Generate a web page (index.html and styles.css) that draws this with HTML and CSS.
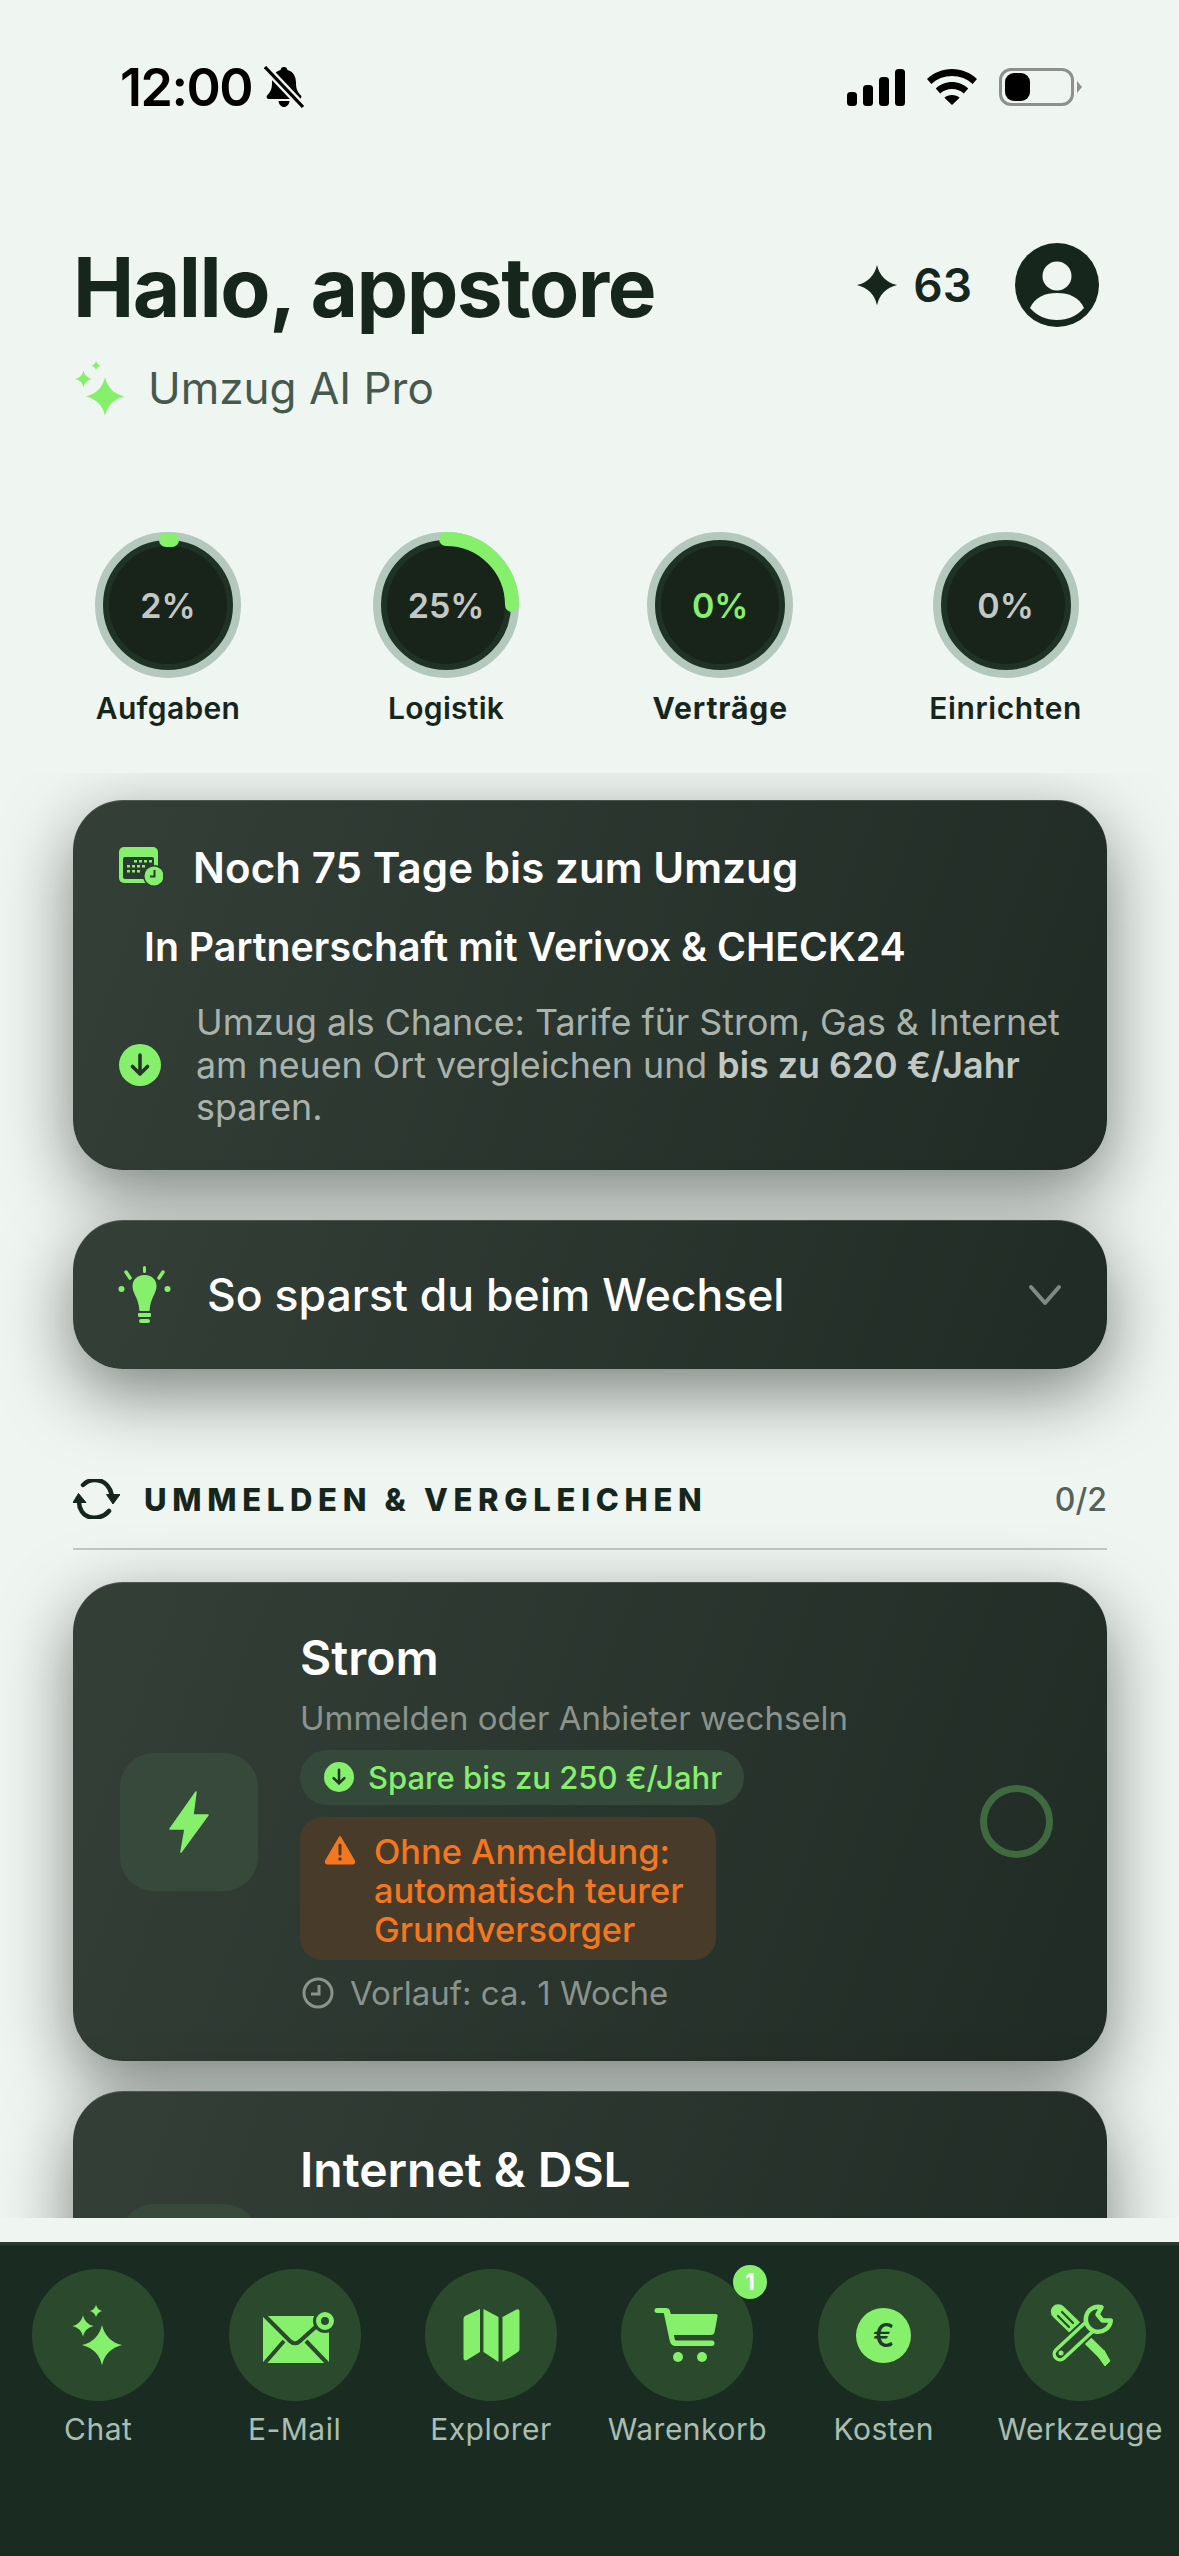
FILE: index.html
```html
<!DOCTYPE html>
<html lang="de">
<head>
  <meta charset="UTF-8" />
  <meta name="viewport" content="width=device-width, initial-scale=1.0"/>
  <title>Umzug AI</title>
  <link rel="stylesheet" href="styles.css">
</head>
<body>
  <svg class="defs" width="0" height="0">
    <symbol id="star" viewBox="0 0 24 24">
      <path d="M12 .5Q14.200 9.800 23.500 12 14.200 14.200 12 23.500 9.800 14.200 .5 12 9.800 9.800 12 .5z"/>
    </symbol>
    <symbol id="down" viewBox="0 0 42 42">
      <circle cx="21" cy="21" r="21" fill="#86ef6c"/>
      <path d="M21 11v19M13.500 22.500 21 30l7.500-7.500" fill="none" stroke="#25352a" stroke-width="3.600" stroke-linecap="round" stroke-linejoin="round"/>
    </symbol>
  </svg>

  <div class="status">
    <div class="status-left">
      <span class="time">12:00</span>
      <svg class="bell" viewBox="0 0 40 42">
        <path d="M20 1c2 0 3.200 1.300 3.400 3 6 1.500 8.600 6.500 8.600 13 0 6 1.500 9 5 12.500 1 1.500.2 3.500-2 3.500H5c-2.200 0-3-2-2-3.500C6.500 26 8 23 8 17 8 10.500 10.600 5.500 16.600 4c.2-1.700 1.400-3 3.400-3zM14.500 35h11c-.4 3.500-2.700 6-5.500 6s-5.100-2.500-5.500-6z"/>
        <path d="M1 1 39 41" stroke="#eff5f1" stroke-width="8"/>
        <path d="M1 1 39 41" stroke="#000" stroke-width="3.200"/>
      </svg>
    </div>
    <div class="status-right">
      <svg class="signal" viewBox="0 0 58 37">
        <rect x="0" y="23" width="10" height="14" rx="3.500"/>
        <rect x="16" y="16" width="10" height="21" rx="3.500"/>
        <rect x="32" y="8" width="10" height="29" rx="3.500"/>
        <rect x="48" y="0" width="10" height="37" rx="3.500"/>
      </svg>
      <svg class="wifi" viewBox="0 0 50 36">
        <path d="M25 0c9.500 0 18.500 3.800 25 10l-4.400 5C40 9.800 33 7 25 7S10 9.800 4.400 15L0 10C6.500 3.800 15.500 0 25 0z"/>
        <path d="M25 13c6.300 0 12 2.400 16.200 6.500l-4.400 5C33.700 21.600 29.600 20 25 20s-8.700 1.600-11.800 4.500l-4.400-5C13 15.400 18.700 13 25 13z"/>
        <path d="M25 26c3 0 5.600 1 7.600 2.800L25 36l-7.600-7.200C19.400 27 22 26 25 26z"/>
      </svg>
      <div class="battery"><div class="battery-fill"></div></div>
    </div>
  </div>

  <header class="hello">
    <h1>Hallo, appstore</h1>
    <div class="hello-right">
      <svg class="points-star"><use href="#star"/></svg>
      <span class="points">63</span>
      <svg class="avatar" viewBox="0 0 84 84">
        <circle cx="42" cy="42" r="42" fill="#17261d"/>
        <circle cx="42" cy="33" r="14.500" fill="#eff5f1"/>
        <path d="M15 65c5-11 15-15 27-15s22 4 27 15c-7 8-16 12-27 12s-20-4-27-12z" fill="#eff5f1"/>
      </svg>
    </div>
  </header>

  <div class="plan">
    <svg class="plan-icon" viewBox="0 0 50 58">
      <use href="#star" x="10" y="17" width="40" height="41"/>
      <use href="#star" x="0" y="10" width="17" height="20"/>
      <use href="#star" x="16" y="0" width="10" height="13"/>
    </svg>
    <span>Umzug AI Pro</span>
  </div>

  <div class="rings">
    <div class="ring-item">
      <div class="ring">
        <svg viewBox="0 0 146 146">
          <circle class="ring-base" cx="73" cy="73" r="69"/>
          <circle class="ring-inner" cx="73" cy="73" r="59"/>
          <path class="ring-arc" d="M71 8h6"/>
        </svg>
        <span class="ring-value">2%</span>
      </div>
      <div class="ring-label">Aufgaben</div>
    </div>
    <div class="ring-item">
      <div class="ring">
        <svg viewBox="0 0 146 146">
          <circle class="ring-base" cx="73" cy="73" r="69"/>
          <circle class="ring-inner" cx="73" cy="73" r="59"/>
          <path class="ring-arc" d="M73 7A66 66 0 0 1 139 73"/>
        </svg>
        <span class="ring-value">25%</span>
      </div>
      <div class="ring-label">Logistik</div>
    </div>
    <div class="ring-item ring-item-third">
      <div class="ring">
        <svg viewBox="0 0 146 146">
          <circle class="ring-base" cx="73" cy="73" r="69"/>
          <circle class="ring-inner" cx="73" cy="73" r="59"/>
        </svg>
        <span class="ring-value ring-value-green">0%</span>
      </div>
      <div class="ring-label ring-label-bold">Verträge</div>
    </div>
    <div class="ring-item">
      <div class="ring">
        <svg viewBox="0 0 146 146">
          <circle class="ring-base" cx="73" cy="73" r="69"/>
          <circle class="ring-inner" cx="73" cy="73" r="59"/>
        </svg>
        <span class="ring-value">0%</span>
      </div>
      <div class="ring-label ring-label-wide">Einrichten</div>
    </div>
  </div>

  <main class="scroll">
    <section class="card countdown">
      <div class="countdown-title">
        <svg class="calendar" viewBox="0 0 44 40">
          <rect x="0" y="0" width="39" height="36" rx="5" fill="#86ef6c"/>
          <rect x="4" y="10" width="31" height="22" rx="2" fill="#2d3a32"/>
          <g fill="#86ef6c">
            <rect x="15" y="13" width="3" height="2.500"/><rect x="20" y="13" width="3" height="2.500"/><rect x="25" y="13" width="3" height="2.500"/><rect x="30" y="13" width="3" height="2.500"/>
            <rect x="8" y="18" width="3" height="2.500"/><rect x="13" y="18" width="3" height="2.500"/><rect x="18" y="18" width="3" height="2.500"/><rect x="23" y="18" width="3" height="2.500"/>
            <rect x="8" y="23" width="3" height="2.500"/><rect x="13" y="23" width="3" height="2.500"/><rect x="18" y="23" width="3" height="2.500"/>
          </g>
          <circle cx="35" cy="29" r="11" fill="#2d3a32"/>
          <circle cx="35" cy="29" r="9.500" fill="#86ef6c"/>
          <path d="M35.500 23v6.500H31" fill="none" stroke="#2d3a32" stroke-width="2"/>
        </svg>
        <span>Noch 75 Tage bis zum Umzug</span>
      </div>
      <div class="partner">In Partnerschaft mit Verivox &amp; CHECK24</div>
      <div class="chance">
        <svg class="down-big"><use href="#down"/></svg>
        <p>Umzug als Chance: Tarife für Strom, Gas &amp; Internet am neuen Ort vergleichen und <b>bis zu 620 €/Jahr</b> sparen.</p>
      </div>
    </section>

    <section class="card tips">
      <svg class="bulb" viewBox="0 0 53 58">
        <g fill="#86ef6c">
          <path d="M26.500 9c8 0 12 5.500 12 11 0 8-6 11-7 25H21.500c-1-14-7-17-7-25 0-5.500 4-11 12-11z"/>
          <rect x="20" y="47" width="13" height="4" rx="1"/>
          <rect x="21" y="53" width="11" height="4" rx="2"/>
          <rect x="25" y="0" width="3" height="7" rx="1.500"/>
          <circle cx="3.500" cy="23" r="3"/>
          <circle cx="49.500" cy="23" r="3"/>
          <path d="M8 6l4 6M45 6l-4 6" stroke="#86ef6c" stroke-width="3.500" stroke-linecap="round"/>
        </g>
      </svg>
      <span class="tips-text">So sparst du beim Wechsel</span>
      <svg class="chevron" viewBox="0 0 34 22">
        <path d="M3 3l14 16L31 3" fill="none" stroke="#7f8a83" stroke-width="4" stroke-linecap="round" stroke-linejoin="round"/>
      </svg>
    </section>

    <div class="section-head">
      <svg class="sync" viewBox="0 0 47 40">
        <path d="M10 6C15 1 22 0 28 2c5 2 9 7 10.500 13M36 32c-5 6-13 8-20 6-6-2-10-8-10-15" fill="none" stroke="#17261d" stroke-width="4.500" stroke-linecap="round"/>
        <path d="M33.500 15.500H47L40 25zM0 23.500h13L5.500 14.500z" fill="#17261d" stroke="#17261d" stroke-linejoin="round"/>
      </svg>
      <span class="section-title">UMMELDEN &amp; VERGLEICHEN</span>
      <span class="section-count">0/2</span>
    </div>

    <section class="card task">
      <div class="tile">
        <svg class="bolt" viewBox="0 0 40 62">
          <path d="M27 1 1 38h15l-4 23 27-37H24z" fill="#86ef6c" stroke="#86ef6c" stroke-width="1.500" stroke-linejoin="round"/>
        </svg>
      </div>
      <div class="task-body">
        <div class="task-title">Strom</div>
        <div class="task-sub">Ummelden oder Anbieter wechseln</div>
        <div class="save-pill">
          <svg class="down-small"><use href="#down"/></svg>
          <span>Spare bis zu 250 €/Jahr</span>
        </div>
        <div class="warn">
          <svg class="warn-icon" viewBox="0 0 32 30">
            <path d="M16 2 30 26c.6 1.300 0 2.500-1.500 2.500h-25C2 28.500 1.400 27.300 2 26z" fill="#f47720" stroke="#f47720" stroke-width="2" stroke-linejoin="round"/>
            <path d="M16 10v9" stroke="#493b29" stroke-width="3" stroke-linecap="round"/>
            <circle cx="16" cy="24" r="1.800" fill="#493b29"/>
          </svg>
          <span>Ohne Anmeldung: automatisch teurer Grundversorger</span>
        </div>
        <div class="lead">
          <svg class="clock" viewBox="0 0 32 32">
            <circle cx="16" cy="16" r="14" fill="none" stroke="#8a938c" stroke-width="3"/>
            <path d="M17 8v9H9" fill="none" stroke="#8a938c" stroke-width="3"/>
          </svg>
          <span>Vorlauf: ca. 1 Woche</span>
        </div>
      </div>
      <div class="check"></div>
    </section>

    <section class="card task task-next">
      <div class="tile"></div>
      <div class="task-body">
        <div class="task-title">Internet &amp; DSL</div>
      </div>
    </section>
  </main>

  <div class="strip"></div>

  <nav class="tabs">
    <div class="tab">
      <div class="tab-circle">
        <svg class="tab-icon" viewBox="0 0 66 66">
          <g fill="#86ef6c">
            <use href="#star" x="16" y="22" width="42" height="42"/>
            <use href="#star" x="7" y="13" width="22" height="22"/>
            <use href="#star" x="24.500" y="2.500" width="13" height="13"/>
          </g>
        </svg>
      </div>
      <span>Chat</span>
    </div>
    <div class="tab">
      <div class="tab-circle">
        <svg class="tab-icon" viewBox="0 0 66 66">
          <path d="M1 14H67V61H1z" fill="#86ef6c"/>
          <path d="M1 12l27 27c3 3 7 3 10 0l30-27M2 62l20-23M66 62 44 39" fill="none" stroke="#2b4a2d" stroke-width="4"/>
          <circle cx="63" cy="19" r="12" fill="#2b4a2d"/>
          <circle cx="63" cy="19" r="6.500" fill="#2b4a2d" stroke="#86ef6c" stroke-width="5"/>
        </svg>
      </div>
      <span>E-Mail</span>
    </div>
    <div class="tab">
      <div class="tab-circle">
        <svg class="tab-icon" viewBox="0 0 66 66">
          <g fill="#86ef6c">
            <path d="M5.500 17c0-1.500.8-2.500 2-3.200L22 7v43L9 58c-2 1-3.500 0-3.500-2z"/>
            <path d="M25.500 7l15 8v45l-15-10z"/>
            <path d="M44.500 15l14-7.500c1.500-.7 3 .2 3 1.800V47c0 1.500-.8 2.500-2 3.200L44.500 60z"/>
          </g>
        </svg>
      </div>
      <span>Explorer</span>
    </div>
    <div class="tab">
      <div class="tab-circle">
        <svg class="tab-icon" viewBox="0 0 66 66">
          <g fill="#86ef6c">
            <path d="M3 6h9c2 0 3.500 1 4 3l.8 3H62c1 0 1.800 1 1.600 2l-3 16c-.3 2-1.800 3-3.600 3H20l.7 4c.2 1 1 1.500 2 1.500H58c1.500 0 2.500 1 2.500 2.700S59.500 44 58 44H21.500c-3 0-5-1.800-5.600-4.500L10 12c0-.8-.5-1-1-1H3C1.500 11 .5 10 .5 8.500S1.500 6 3 6z"/>
            <circle cx="24" cy="55" r="5"/>
            <circle cx="48" cy="55" r="5"/>
          </g>
        </svg>
      </div>
      <div class="badge">1</div>
      <span>Warenkorb</span>
    </div>
    <div class="tab">
      <div class="tab-circle">
        <div class="euro">€</div>
      </div>
      <span>Kosten</span>
    </div>
    <div class="tab">
      <div class="tab-circle">
        <svg class="tab-icon" viewBox="0 0 66 66">
          <path d="M11.300 9.700 29.700 27.300" stroke="#86ef6c" stroke-width="15" stroke-linecap="round"/>
          <path d="M11 14l11 11M15 10l11 11" stroke="#2b4a2d" stroke-width="2.200" stroke-linecap="round"/>
          <path d="M30 28 54.700 52.300" stroke="#86ef6c" stroke-width="9"/>
          <path d="M49.700 52.300 57 48.300 63 59l-5 5z" fill="#86ef6c" stroke="#86ef6c" stroke-linejoin="round"/>
          <path d="M42 25 13 52" stroke="#2b4a2d" stroke-width="19" stroke-linecap="round"/>
          <path d="M42 25 13 52" stroke="#86ef6c" stroke-width="15" stroke-linecap="round"/>
          <path d="M42 25 13 52" stroke="#2b4a2d" stroke-width="8" stroke-linecap="round"/>
          <circle cx="14" cy="51" r="2.500" fill="#86ef6c"/>
          <path d="M54.500 5.200A12.500 12.500 0 1 0 63.800 18.400L55.500 18.500 50.500 12.500z" fill="#2b4a2d" stroke="#86ef6c" stroke-width="4.500" stroke-linejoin="round"/>
        </svg>
      </div>
      <span>Werkzeuge</span>
    </div>
  </nav>
</body>
</html>
```

FILE: styles.css
```css
* {
  box-sizing: border-box;
}

body {
  margin: 0;
  width: 1179px;
  height: 2556px;
  overflow: hidden;
  display: flex;
  flex-direction: column;
  background: #eff5f1;
  color: #17261d;
  font-family: Inter, "Liberation Sans", sans-serif;
}

.defs {
  position: absolute;
}

/* status bar */
.status {
  height: 243px;
  flex: none;
  padding: 66px 105px 0 120px;
  display: flex;
  justify-content: space-between;
  align-items: flex-start;
}

.status-left {
  display: flex;
  align-items: center;
  gap: 12px;
  height: 42px;
}

.time {
  font-size: 52px;
  font-weight: 600;
  letter-spacing: -1.5px;
  color: #000;
}

.bell {
  width: 40px;
  height: 42px;
}

.status-right {
  display: flex;
  align-items: center;
  height: 40px;
  gap: 22px;
  margin-top: 1px;
}

.signal {
  width: 58px;
  height: 37px;
}

.wifi {
  width: 50px;
  height: 36px;
}

.battery {
  position: relative;
  width: 75px;
  height: 38px;
  border: 3px solid #8e908e;
  border-radius: 12px;
  padding: 2px 3px;
}

.battery::after {
  content: "";
  position: absolute;
  right: -11px;
  top: 10px;
  border-left: 5px solid #8e908e;
  border-top: 6px solid transparent;
  border-bottom: 6px solid transparent;
}

.battery-fill {
  width: 25px;
  height: 100%;
  background: #000;
  border-radius: 9px;
}

/* greeting */
.hello {
  height: 84px;
  flex: none;
  padding: 0 80px 0 73px;
  display: flex;
  justify-content: space-between;
  align-items: center;
}

h1 {
  margin: 6px 0 0;
  font-size: 82px;
  font-weight: 700;
  letter-spacing: -1.500px;
  line-height: 84px;
}

.hello-right {
  display: flex;
  align-items: center;
}

.points-star {
  width: 42px;
  height: 42px;
  fill: #17261d;
  margin-right: 15px;
}

.points {
  font-size: 46px;
  font-weight: 600;
  margin-right: 43px;
}

.avatar {
  width: 84px;
  height: 84px;
}

.plan {
  flex: none;
  height: 60px;
  margin-top: 31px;
  padding-left: 75px;
  display: flex;
  align-items: center;
  gap: 23px;
  font-size: 44px;
  color: #46594f;
}

.plan-icon {
  width: 50px;
  height: 58px;
  fill: #86ef6c;
}

/* rings */
.rings {
  flex: none;
  height: 241px;
  margin-top: 114px;
  padding: 0 97px 0 95px;
  display: flex;
  justify-content: space-between;
}

.ring-item {
  display: flex;
  flex-direction: column;
  align-items: center;
}

.ring-item-third {
  margin: 0 4px 0 -4px;
}

.ring {
  position: relative;
  width: 146px;
  height: 146px;
}

.ring svg {
  display: block;
  width: 146px;
  height: 146px;
}

.ring-base {
  fill: #1e3325;
  stroke: #b5c8bd;
  stroke-width: 8;
}

.ring-inner {
  fill: #18231a;
}

.ring-arc {
  fill: none;
  stroke: #86ef6c;
  stroke-width: 14;
  stroke-linecap: round;
}

.ring-value {
  position: absolute;
  inset: 0;
  display: flex;
  align-items: center;
  justify-content: center;
  font-size: 34px;
  font-weight: 600;
  color: #c4c8c4;
}

.ring-value-green {
  color: #86ef6c;
}

.ring-label {
  margin-top: 10px;
  line-height: 40px;
  font-size: 30px;
  font-weight: 600;
  letter-spacing: .3px;
  white-space: nowrap;
}

.ring-label-bold {
  font-weight: 700;
  letter-spacing: .9px;
}

.ring-label-wide {
  letter-spacing: .6px;
}

/* scroll area */
.scroll {
  flex: none;
  height: 1445px;
  overflow: hidden;
  padding: 27px 72px 0 73px;
}

.card {
  border-radius: 50px;
  background: linear-gradient(110deg, #343f38, #1f2b24);
  box-shadow: inset 0 1px 0 rgba(255, 255, 255, .14), 0 24px 70px rgba(10, 20, 15, .5);
  color: #fff;
}

.countdown {
  height: 370px;
  padding: 45px 45px 0 46px;
}

.countdown-title {
  display: flex;
  align-items: center;
  gap: 30px;
  height: 44px;
  font-size: 42px;
  font-weight: 600;
  letter-spacing: .1px;
}

.calendar {
  width: 44px;
  height: 40px;
}

.partner {
  margin: 36px 0 0 25px;
  height: 44px;
  line-height: 44px;
  font-size: 39.300px;
  font-weight: 600;
  white-space: nowrap;
}

.chance {
  display: flex;
  align-items: center;
  gap: 35px;
  margin-top: 32px;
}

.down-big {
  flex: none;
  width: 42px;
  height: 42px;
}

.chance p {
  margin: 0;
  font-size: 35.800px;
  line-height: 42.500px;
  color: #a9b3ac;
}

.chance b {
  font-weight: 600;
  color: #c2c9c4;
}

.tips {
  height: 149px;
  margin-top: 50px;
  padding: 0 45px;
  display: flex;
  align-items: center;
}

.bulb {
  width: 53px;
  height: 58px;
  margin-right: 36px;
}

.tips-text {
  flex: 1;
  font-size: 44.500px;
  font-weight: 500;
}

.chevron {
  width: 34px;
  height: 22px;
}

.section-head {
  height: 73px;
  margin-top: 108px;
  margin-bottom: 32px;
  padding-bottom: 27px;
  border-bottom: 2px solid #c0c8c3;
  display: flex;
  align-items: center;
}

.sync {
  width: 47px;
  height: 40px;
  margin-right: 24px;
}

.section-title {
  flex: 1;
  font-size: 31px;
  font-weight: 800;
  letter-spacing: 5.700px;
}

.section-count {
  font-size: 32px;
  font-weight: 500;
  color: #55625b;
}

.task {
  height: 479px;
  padding: 0 54px 0 47px;
  display: flex;
  align-items: center;
  gap: 42px;
}

.task-next {
  height: 364px;
  margin-top: 30px;
}

.task-next .task-body {
  align-self: flex-start;
  padding-top: 52px;
}

.tile {
  flex: none;
  width: 138px;
  height: 138px;
  border-radius: 34px;
  background: #37493a;
  display: flex;
  align-items: center;
  justify-content: center;
}

.bolt {
  width: 40px;
  height: 62px;
}

.task-body {
  flex: 1;
}

.task-title {
  height: 54px;
  line-height: 54px;
  font-size: 48px;
  font-weight: 600;
}

.task-sub {
  margin-top: 13px;
  height: 40px;
  line-height: 40px;
  font-size: 33px;
  color: #8a938c;
}

.save-pill {
  display: flex;
  width: fit-content;
  align-items: center;
  gap: 14px;
  height: 55px;
  margin-top: 12px;
  padding: 0 22px 0 24px;
  border-radius: 28px;
  background: #35493a;
  color: #86ef6c;
  font-size: 31px;
  font-weight: 500;
  white-space: nowrap;
}

.down-small {
  width: 30px;
  height: 30px;
}

.warn {
  display: flex;
  gap: 18px;
  width: 416px;
  height: 143px;
  margin-top: 12px;
  padding: 15px 14px 0 24px;
  border-radius: 22px;
  background: #493b29;
  color: #f47720;
  font-size: 34.400px;
  font-weight: 500;
  line-height: 39px;
}

.warn-icon {
  flex: none;
  width: 32px;
  height: 30px;
  margin-top: 3px;
}

.lead {
  display: flex;
  align-items: center;
  gap: 16px;
  height: 40px;
  margin-top: 13px;
  padding-left: 2px;
  font-size: 33px;
  color: #8a938c;
}

.clock {
  width: 32px;
  height: 32px;
}

.check {
  flex: none;
  width: 73px;
  height: 73px;
  border-radius: 50%;
  border: 7px solid #3f6a40;
}

.strip {
  flex: none;
  height: 24px;
}

/* bottom tabs */
.tabs {
  flex: 1;
  border-top: 3px solid #2a3d33;
  background: #1a2c22;
  padding-top: 24px;
  display: grid;
  grid-template-columns: repeat(6, 196.400px);
  align-items: start;
  justify-items: center;
}

.tab {
  position: relative;
  display: flex;
  flex-direction: column;
  align-items: center;
  font-size: 30px;
  letter-spacing: .5px;
  color: #a9bdb1;
  white-space: nowrap;
}

.tab-circle {
  width: 132px;
  height: 132px;
  border-radius: 50%;
  background: #2b4a2d;
  display: flex;
  align-items: center;
  justify-content: center;
}

.tab span {
  margin-top: 8px;
  line-height: 40px;
}

.tab-icon {
  width: 66px;
  height: 66px;
  overflow: visible;
}

.badge {
  position: absolute;
  top: -4px;
  right: 0;
  width: 34px;
  height: 34px;
  border-radius: 50%;
  background: #86ef6c;
  color: #fff;
  font-size: 23px;
  font-weight: 700;
  line-height: 34px;
  text-align: center;
  letter-spacing: 0;
}

.euro {
  width: 55px;
  height: 55px;
  border-radius: 50%;
  background: #86ef6c;
  color: #1f3a27;
  font-size: 32px;
  font-weight: 500;
  line-height: 55px;
  text-align: center;
  letter-spacing: 0;
}
```
